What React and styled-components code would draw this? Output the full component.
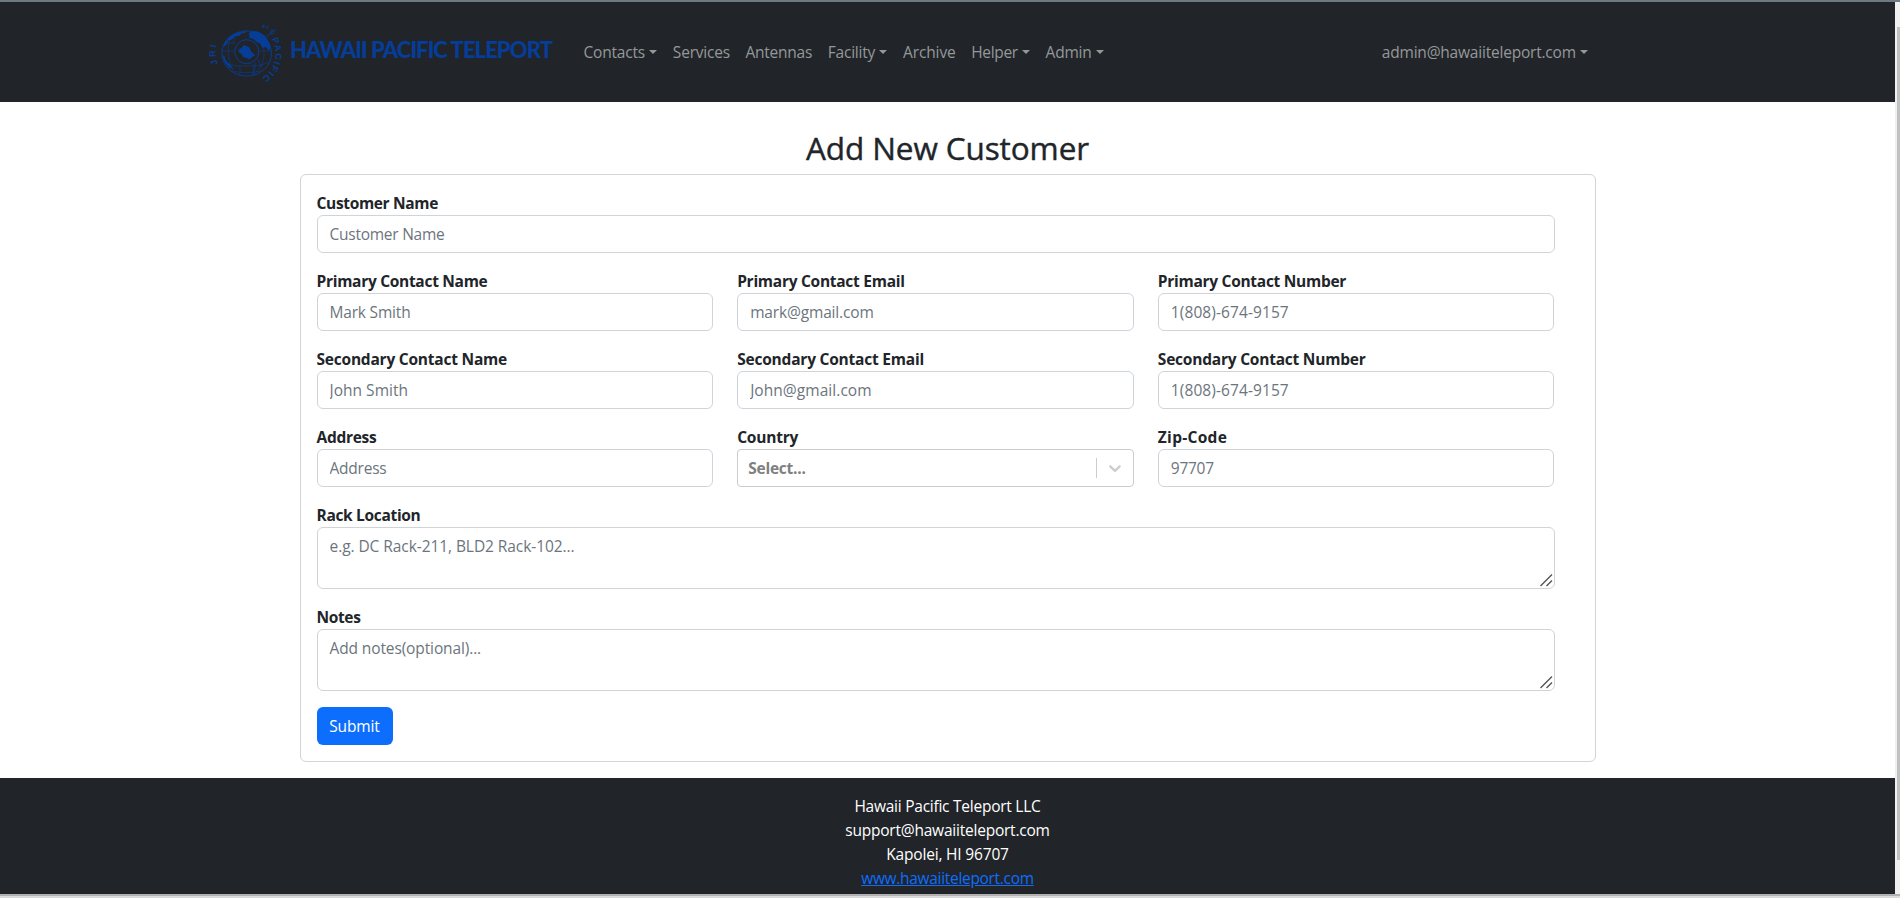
import React from "react";
import styled, { createGlobalStyle } from "styled-components";

const GlobalStyle = createGlobalStyle`
  *, *::before, *::after { box-sizing: border-box; }
  html, body { margin: 0; padding: 0; background: #fff; overflow: hidden; }
  body {
    font-family: "Segoe UI", "Open Sans", "Noto Sans", sans-serif;
    font-size: 15.5px;
    line-height: 24px;
    color: #212529;
  }
`;

const Window = styled.div`
  display: flex;
  flex-direction: column;
  height: 898px;
  width: 1900px;
`;

const WindowTop = styled.div`
  flex: none;
  height: 2px;
  background: #6c7a82;
`;

const WindowBottom = styled.div`
  flex: none;
  height: 4px;
  background: #dcdadc;
  border-top: 2px solid #b2b0b1;
`;

const Viewport = styled.div`
  flex: 1;
  min-height: 0;
  display: flex;
`;

const Page = styled.div`
  flex: 1;
  display: flex;
  flex-direction: column;
`;

const ScrollTrack = styled.div`
  width: 5px;
  flex: none;
  background: #f0f0f0;
  padding: 25px 0 34px 2px;
  display: flex;
`;

const ScrollThumb = styled.div`
  flex: 1;
  background: #c1c1c1;
`;

const Navbar = styled.header`
  height: 100px;
  flex: none;
  background: #212529;
  display: flex;
  align-items: center;
  padding: 0 307px 0 205px;
`;

const Brand = styled.a`
  display: flex;
  align-items: center;
  width: 378.5px;
`;

const BrandName = styled.span`
  font: 900 22px/24px Lato, sans-serif;
  letter-spacing: -0.93px;
  color: #053d98;
  white-space: nowrap;
  padding-bottom: 5px;
`;

const NavLinks = styled.nav`
  display: flex;
  gap: 15.7px;
  flex: 1;
`;

const NavLink = styled.a`
  display: flex;
  align-items: center;
  color: #95989a;
  white-space: nowrap;
  letter-spacing: ${(p) => p.$track}px;
`;

const Caret = styled.span`
  margin-left: 4.2px;
  border: 4.8px solid transparent;
  border-top-color: #95989a;
  border-bottom: 0;
`;

const Main = styled.main`
  flex: none;
  padding: 27px 299.5px 16px;
`;

const Title = styled.h2`
  margin: 0 0 7px;
  font-size: 31.5px;
  font-weight: 500;
  line-height: 38px;
  letter-spacing: -0.11px;
  text-align: center;
  -webkit-text-stroke: 0.4px #212529;
`;

const Card = styled.form`
  border: 1px solid #d3d4d5;
  border-radius: 6px;
  padding: 16px 40px 16px 16px;
  display: flex;
  flex-direction: column;
  align-items: stretch;
  gap: 16px;
`;

const Row = styled.div`
  display: grid;
  grid-template-columns: repeat(${(p) => p.$cols || 1}, minmax(0, 1fr));
  column-gap: 24px;
`;

const Field = styled.div`
  display: flex;
  flex-direction: column;
  position: relative;
`;

const Label = styled.label`
  font-weight: 700;
  letter-spacing: ${(p) => p.$track}px;
`;

const Input = styled.input`
  height: 38px;
  width: 100%;
  margin: 0;
  padding: 6px 12px;
  border: 1px solid #ced4da;
  border-radius: 6px;
  background: #fff;
  font: inherit;
  outline: none;
  &::placeholder {
    color: #6c757d;
    opacity: 1;
    letter-spacing: ${(p) => p.$track}px;
  }
`;

const TextArea = styled(Input).attrs({ as: "textarea" })`
  height: 62px;
  display: block;
  resize: none;
`;

const Grip = styled.svg`
  position: absolute;
  right: 2px;
  bottom: 2px;
  width: 13px;
  height: 13px;
  fill: none;
  stroke: #555;
  stroke-width: 1.4;
`;

const SelectBox = styled.div`
  height: 38px;
  display: flex;
  align-items: center;
  border: 1px solid #ccc;
  border-radius: 4px;
`;

const SelectText = styled.span`
  flex: 1;
  padding-left: 10px;
  font-weight: 700;
  color: #808080;
  letter-spacing: -0.23px;
`;

const SelectDivider = styled.span`
  width: 1px;
  height: 20px;
  background: #ccc;
`;

const SelectArrow = styled.svg`
  width: 20px;
  height: 20px;
  margin: 0 8px;
  fill: #ccc;
`;

const Submit = styled.button`
  align-self: flex-start;
  width: 76px;
  height: 38px;
  border: 0;
  border-radius: 6px;
  background: #0d6efd;
  color: #fff;
  font: inherit;
  letter-spacing: -0.13px;
`;

const Footer = styled.footer`
  flex: 1;
  background: #212529;
  color: #fff;
  padding-top: 16px;
  display: flex;
  flex-direction: column;
  align-items: center;
`;

const FooterLine = styled.div`
  letter-spacing: ${(p) => p.$track}px;
`;

const FooterLink = styled.a`
  color: #0d6efd;
  text-decoration: underline;
  letter-spacing: -0.31px;
`;

const SealText = styled.text`
  font: 700 9px "Liberation Sans", sans-serif;
  fill: #053d98;
`;

function Globe() {
  return (
    <svg width="85" height="68" viewBox="0 0 85 68" fill="none" stroke="#053d98">
      <defs>
        <path id="seal-right" d="M66.6 21 A28.5 28.5 0 0 1 52.5 62" />
        <path id="seal-left" d="M13 46 A30 30 0 0 1 12.5 24" />
      </defs>
      <ellipse cx="41.7" cy="35.5" rx="24.8" ry="22.6" strokeWidth="0.9" />
      <g strokeWidth="0.6">
        <path d="M17 33h12.5M54 33h12M19 44c5 3 11 4 16 4h13c6 0 12-2 16-4M27 53c8 2 20 2 29 0" />
        <path d="M26 19c-4 8-4 22 2 33M33 15c-3 3-4 6-5 11M35 47v10M49 46l-1 11M56 22c4 8 4 18 0 27M21 25h9" />
        <path d="M51 44l-3 13 8-8-3-8M63 17L55 26" />
      </g>
      <circle cx="41.7" cy="33.7" r="12" strokeWidth="1" />
      <g fill="#053d98" stroke="none">
        <path d="M33.300 31.700l3.500-2 2-3 5.500 2.500 2 4.500 4 3.500-3.500 2-2 2-4-1.500-2.500-.5-2-3.500-2-1z" />
        <path d="M44 15l3-2 6 .5 6 3.500 4 5 2.500 6-1 5-4-4-3 1-2-4-4-2-3-3-4-1z" />
        <path d="M18 28l2-4 4-5 5-3 5-2 8-1-2 2-4 .5-1 2-5 1-3 3-4 1-1 4-3 2z" />
        <path d="M17.500 37l2 1 1 4 4 4 3 5-4-2-4-5z" />
        <path d="M57 8l2-1.500 1 1.500-2 2zM61 9l3-2-2 4z" />
      </g>
      <path d="M61 19l7-6M66 12.500l4-.5-1.500 3.500-3 1z" strokeWidth="0.8" />
      <SealText stroke="none">
        <textPath href="#seal-right" textLength="44">PACIFIC</textPath>
      </SealText>
      <SealText stroke="none">
        <textPath href="#seal-left" textLength="19">JRI</textPath>
      </SealText>
    </svg>
  );
}

const links = [
  { text: "Contacts", track: -0.2, menu: true },
  { text: "Services", track: -0.21 },
  { text: "Antennas", track: -0.26 },
  { text: "Facility", track: -0.2, menu: true },
  { text: "Archive", track: -0.13 },
  { text: "Helper", track: -0.35, menu: true },
  { text: "Admin", track: -0.21, menu: true },
];

function TextField({ label, track, hint, hintTrack, area }) {
  const Control = area ? TextArea : Input;
  return (
    <Field>
      <Label $track={track}>{label}</Label>
      <Control placeholder={hint} $track={hintTrack} />
      {area && (
        <Grip viewBox="0 0 13 13">
          <path d="M0.500 12L12 0.500M6.500 12L12 6.500" />
        </Grip>
      )}
    </Field>
  );
}

export default function App() {
  return (
    <Window>
      <GlobalStyle />
      <WindowTop />
      <Viewport>
        <Page>
          <Navbar>
            <Brand>
              <Globe />
              <BrandName>HAWAII PACIFIC TELEPORT</BrandName>
            </Brand>
            <NavLinks>
              {links.map((l) => (
                <NavLink key={l.text} $track={l.track}>
                  {l.text}
                  {l.menu && <Caret />}
                </NavLink>
              ))}
            </NavLinks>
            <NavLink $track={-0.21}>
              admin@hawaiiteleport.com
              <Caret />
            </NavLink>
          </Navbar>
          <Main>
            <Title>Add New Customer</Title>
            <Card>
              <TextField label="Customer Name" track={-0.34} hint="Customer Name" hintTrack={-0.25} />
              <Row $cols={3}>
                <TextField label="Primary Contact Name" track={-0.29} hint="Mark Smith" hintTrack={-0.19} />
                <TextField label="Primary Contact Email" track={-0.27} hint="mark@gmail.com" hintTrack={-0.16} />
                <TextField label="Primary Contact Number" track={-0.28} hint="1(808)-674-9157" hintTrack={0.09} />
              </Row>
              <Row $cols={3}>
                <TextField label="Secondary Contact Name" track={-0.22} hint="John Smith" hintTrack={0.02} />
                <TextField label="Secondary Contact Email" track={-0.21} hint="John@gmail.com" hintTrack={0.05} />
                <TextField label="Secondary Contact Number" track={-0.22} hint="1(808)-674-9157" hintTrack={0.09} />
              </Row>
              <Row $cols={3}>
                <TextField label="Address" track={-0.28} hint="Address" hintTrack={-0.23} />
                <Field>
                  <Label $track={-0.21}>Country</Label>
                  <SelectBox>
                    <SelectText>Select...</SelectText>
                    <SelectDivider />
                    <SelectArrow viewBox="0 0 20 20">
                      <path d="M4.516 7.548c0.436-0.446 1.043-0.481 1.576 0l3.908 3.747 3.908-3.747c0.533-0.481 1.141-0.446 1.574 0 0.436 0.445 0.408 1.197 0 1.615-0.406 0.418-4.695 4.502-4.695 4.502-0.217 0.223-0.502 0.335-0.787 0.335s-0.570-0.112-0.789-0.335c0 0-4.287-4.084-4.695-4.502s-0.436-1.170 0-1.615z" />
                    </SelectArrow>
                  </SelectBox>
                </Field>
                <TextField label="Zip-Code" track={0.3} hint="97707" hintTrack={-0.27} />
              </Row>
              <TextField area label="Rack Location" track={-0.32} hint="e.g. DC Rack-211, BLD2 Rack-102..." hintTrack={-0.07} />
              <TextField area label="Notes" track={-0.36} hint="Add notes(optional)..." hintTrack={-0.12} />
              <Submit type="button">Submit</Submit>
            </Card>
          </Main>
          <Footer>
            <FooterLine $track={-0.25}>Hawaii Pacific Teleport LLC</FooterLine>
            <FooterLine $track={-0.22}>support@hawaiiteleport.com</FooterLine>
            <FooterLine $track={-0.18}>Kapolei, HI 96707</FooterLine>
            <FooterLink>www.hawaiiteleport.com</FooterLink>
          </Footer>
        </Page>
        <ScrollTrack>
          <ScrollThumb />
        </ScrollTrack>
      </Viewport>
      <WindowBottom />
    </Window>
  );
}
